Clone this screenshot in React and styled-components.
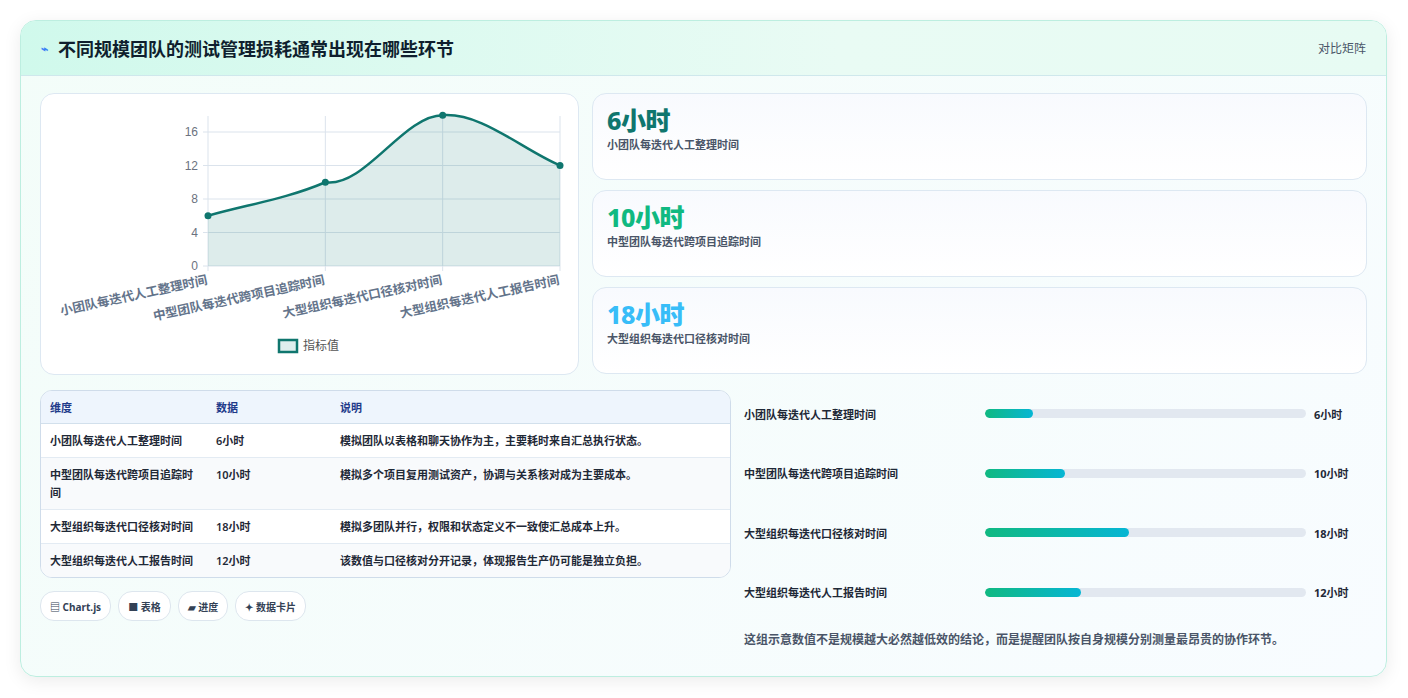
import React from "react";
import styled, { createGlobalStyle } from "styled-components";

const G = createGlobalStyle`
  body{margin:0;background:#fff;font-family:"Noto Sans","Noto Sans CJK SC",sans-serif;}
`;
const Page = styled.div`padding:20px 20px 20px 20px;width:1408px;box-sizing:border-box;`;
const Card = styled.div`width:1367px;height:657px;box-sizing:border-box;border:1px solid #bdeee0;border-radius:16px;
  background:linear-gradient(135deg,#f3fdf9,#f8fcff);box-shadow:0 4px 18px rgba(0,0,0,.08);overflow:hidden;display:flex;flex-direction:column;`;
const Header = styled.div`height:55px;flex:none;box-sizing:border-box;display:flex;align-items:center;justify-content:space-between;padding:0 20px;
  background:linear-gradient(90deg,#d0f9ec,#e9fbf4 60%,#e7fbf3);border-bottom:1px solid #cfe8ec;`;
const Title = styled.h1`margin:0;font-size:18px;font-weight:700;color:#0f1f2e;display:flex;align-items:center;gap:10px;`;
const Tag = styled.span`font-size:12px;color:#4a5568;`;
const Body = styled.div`padding:17px 19px 0 19px;display:flex;flex-direction:column;gap:15px;`;
const TopRow = styled.div`display:grid;grid-template-columns:539px 1fr;column-gap:13px;`;
const BottomRow = styled.div`display:grid;grid-template-columns:691px 1fr;column-gap:13px;`;
const Panel = styled.div`background:#fff;border:1px solid #dde8f2;border-radius:14px;`;
const ChartPanel = styled(Panel)`height:282px;box-sizing:border-box;position:relative;`;
const Stats = styled.div`display:flex;flex-direction:column;gap:10px;`;
const Stat = styled(Panel)`height:87px;box-sizing:border-box;padding:10px 14px;background:linear-gradient(180deg,#f8fafe,#fff);`;
const StatVal = styled.div`font-size:25px;font-weight:800;color:${p=>p.c};line-height:32px;letter-spacing:-0.5px;`;
const StatLbl = styled.div`font-size:11px;font-weight:600;color:#4a5568;`;
const TableWrap = styled.div`border:1px solid #cfdcea;border-radius:12px;overflow:hidden;background:#fff;`;
const Table = styled.table`width:100%;border-collapse:collapse;table-layout:fixed;font-size:11px;font-weight:600;color:#1f2937;`;
const Th = styled.th`text-align:left;font-weight:700;color:#1e3a8a;background:#eef5fd;padding:0 9px;height:32px;border-bottom:1px solid #d2e0ec;`;
const Td = styled.td`padding:8px 9px 7px;vertical-align:top;line-height:18px;border-top:1px solid #e3ebf3;background:${p=>p.alt?"#f8fafc":"#fff"};`;
const Chips = styled.div`display:flex;gap:7px;margin-top:13px;`;
const Chip = styled.span`font-size:10px;font-weight:700;color:#334155;border:1px solid #dde6ee;border-radius:14px;padding:0 9px;height:28px;display:inline-flex;align-items:center;gap:3px;background:#fff;`;
const Right = styled.div`display:flex;flex-direction:column;padding-top:-6px;margin-top:-6px;`;
const Row = styled.div`display:grid;grid-template-columns:233px 321px 1fr;align-items:center;height:59.5px;column-gap:8px;`;
const RLbl = styled.div`font-size:11px;font-weight:700;color:#1f2937;`;
const Track = styled.div`height:9px;background:#e2e8f0;border-radius:5px;overflow:hidden;`;
const Fill = styled.div`height:100%;border-radius:5px;background:linear-gradient(90deg,#10b981,#06b6d4);`;
const RVal = styled.div`font-size:11px;font-weight:700;color:#1f2937;`;
const Note = styled.div`font-size:12px;font-weight:600;color:#4a5568;margin-top:8px;`;

const data=[["小团队每迭代人工整理时间",6,"模拟团队以表格和聊天协作为主，主要耗时来自汇总执行状态。"],
["中型团队每迭代跨项目追踪时间",10,"模拟多个项目复用测试资产，协调与关系核对成为主要成本。"],
["大型组织每迭代口径核对时间",18,"模拟多团队并行，权限和状态定义不一致使汇总成本上升。"],
["大型组织每迭代人工报告时间",12,"该数值与口径核对分开记录，体现报告生产仍可能是独立负担。"]];

function Chart(){
  const x0=167,x1=519,yb=172,k=8.375;
  const xs=data.map((_,i)=>x0+i*(x1-x0)/3);
  const ys=data.map(d=>yb-d[1]*k);
  let path=`M${xs[0]},${ys[0]}`;
  for(let i=0;i<3;i++){const t=(xs[i+1]-xs[i])/3;
    const m0=i===0?(ys[1]-ys[0])/(xs[1]-xs[0]):(ys[i+1]-ys[i-1])/(xs[i+1]-xs[i-1]);
    const m1=i===2?(ys[3]-ys[2])/(xs[3]-xs[2]):(ys[i+2]-ys[i])/(xs[i+2]-xs[i]);
    const mm0=i===1?0.15:m0, mm1=i===1?0:m1;
    path+=` C${xs[i]+t},${ys[i]+mm0*t} ${xs[i+1]-t},${ys[i+1]-mm1*t} ${xs[i+1]},${ys[i+1]}`;}
  return <svg width="537" height="280" style={{position:"absolute",left:0,top:0}}>
    {[0,4,8,12,16].map(v=><g key={v}><line x1={x0-5} x2={x1} y1={yb-v*k} y2={yb-v*k} stroke="#dbe3ec"/>
      <text x={x0-10} y={yb-v*k+4} fontSize="12" fill="#6b7280" textAnchor="end" fontFamily="Liberation Sans">{v}</text></g>)}
    {xs.map((x,i)=><line key={i} x1={x} x2={x} y1={22} y2={yb+5} stroke="#dbe3ec"/>)}
    <path d={path+` L${x1},${yb} L${x0},${yb} Z`} fill="rgba(15,118,110,0.14)"/>
    <path d={path} fill="none" stroke="#0f766e" strokeWidth="2.5"/>
    {xs.map((x,i)=><circle key={i} cx={x} cy={ys[i]} r="3.5" fill="#0f766e"/>)}
    {xs.map((x,i)=><text key={i} transform={`translate(${x},${yb+18}) rotate(-12)`} textAnchor="end" fontSize="12.5" fontWeight="700" fill="#64748b">{data[i][0]}</text>)}
    <rect x="238" y="246" width="18" height="12" fill="#dfeeed" stroke="#0f766e" strokeWidth="2.5"/>
    <text x="262" y="256" fontSize="12" fill="#555">指标值</text>
  </svg>;
}

export default function App(){
  const cols=["#0f766e","#10b981","#38bdf8"];
  return <Page><G/><Card>
    <Header><Title><span style={{color:"#3b82f6",fontSize:12}}>⌁</span>不同规模团队的测试管理损耗通常出现在哪些环节</Title><Tag>对比矩阵</Tag></Header>
    <Body>
      <TopRow>
        <ChartPanel><Chart/></ChartPanel>
        <Stats>{data.slice(0,3).map((d,i)=><Stat key={i}><StatVal c={cols[i]}>{d[1]}小时</StatVal><StatLbl>{d[0]}</StatLbl></Stat>)}</Stats>
      </TopRow>
      <BottomRow>
        <div>
          <TableWrap><Table><colgroup><col style={{width:166}}/><col style={{width:124}}/><col/></colgroup>
          <thead><tr><Th>维度</Th><Th>数据</Th><Th>说明</Th></tr></thead>
          <tbody>{data.map((d,i)=><tr key={i}><Td alt={i%2}>{d[0]}</Td><Td alt={i%2}>{d[1]}小时</Td><Td alt={i%2}>{d[2]}</Td></tr>)}</tbody></Table></TableWrap>
          <Chips><Chip>▤ Chart.js</Chip><Chip>■ 表格</Chip><Chip>▰ 进度</Chip><Chip>✦ 数据卡片</Chip></Chips>
        </div>
        <Right>
          {data.map((d,i)=><Row key={i}><RLbl>{d[0]}</RLbl><Track><Fill style={{width:`${d[1]/40*100}%`}}/></Track><RVal>{d[1]}小时</RVal></Row>)}
          <Note>这组示意数值不是规模越大必然越低效的结论，而是提醒团队按自身规模分别测量最昂贵的协作环节。</Note>
        </Right>
      </BottomRow>
    </Body>
  </Card></Page>;
}
